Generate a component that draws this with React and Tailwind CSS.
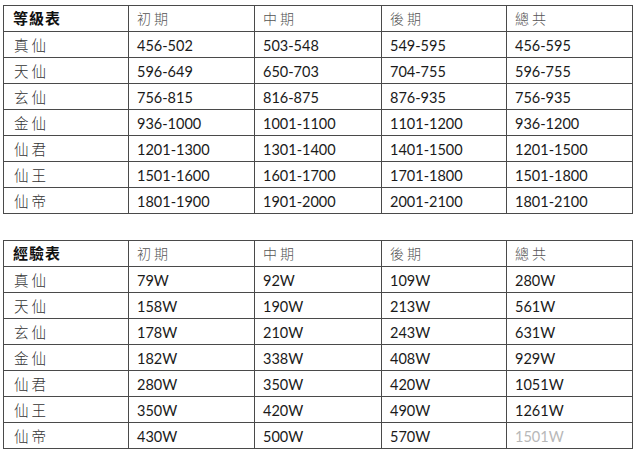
import React from "react";

const t1 = {
  title: "等級表",
  rows: [
    ["真仙", "456-502", "503-548", "549-595", "456-595"],
    ["天仙", "596-649", "650-703", "704-755", "596-755"],
    ["玄仙", "756-815", "816-875", "876-935", "756-935"],
    ["金仙", "936-1000", "1001-1100", "1101-1200", "936-1200"],
    ["仙君", "1201-1300", "1301-1400", "1401-1500", "1201-1500"],
    ["仙王", "1501-1600", "1601-1700", "1701-1800", "1501-1800"],
    ["仙帝", "1801-1900", "1901-2000", "2001-2100", "1801-2100"],
  ],
};
const t2 = {
  title: "經驗表",
  rows: [
    ["真仙", "79W", "92W", "109W", "280W"],
    ["天仙", "158W", "190W", "213W", "561W"],
    ["玄仙", "178W", "210W", "243W", "631W"],
    ["金仙", "182W", "338W", "408W", "929W"],
    ["仙君", "280W", "350W", "420W", "1051W"],
    ["仙王", "350W", "420W", "490W", "1261W"],
    ["仙帝", "430W", "500W", "570W", "1501W"],
  ],
};

const heads = ["初期", "中期", "後期", "總共"];

function Table({ data, faded }) {
  return (
    <div className="grid grid-cols-[125px_126px_127px_125px_126px] border-l border-t border-[#4a4a4a] w-fit">
      <div className="h-[26px] border-r border-b border-[#4a4a4a] pl-[9px] flex items-center text-[15px] font-bold text-[#111] tracking-[1px] font-['Noto_Sans_CJK_TC','Noto_Sans',sans-serif]">
        {data.title}
      </div>
      {heads.map((h) => (
        <div
          key={h}
          className="h-[26px] border-r border-b border-[#4a4a4a] pl-[8px] flex items-center text-[14px] font-light text-[#555] tracking-[3px] font-['Noto_Sans_CJK_TC','Noto_Sans',sans-serif]"
        >
          {h}
        </div>
      ))}
      {data.rows.map((r, i) => (
        <React.Fragment key={i}>
          <div className="h-[26px] border-r border-b border-[#4a4a4a] pl-[10px] flex items-center text-[14.5px] font-light text-[#333] tracking-[3px] font-['Noto_Sans_CJK_TC','Noto_Sans',sans-serif]">
            {r[0]}
          </div>
          {r.slice(1).map((v, j) => (
            <div
              key={j}
              className={
                "h-[26px] border-r border-b border-[#4a4a4a] pl-[8px] pt-[2px] flex items-center text-[14.5px] font-['Lato','Open_Sans',sans-serif] " +
                (faded && i === data.rows.length - 1 && j === 3 ? "text-[#b8b8b8]" : "text-[#1a1a1a]")
              }
            >
              {v}
            </div>
          ))}
        </React.Fragment>
      ))}
    </div>
  );
}

export default function App() {
  return (
    <div className="w-[640px] h-[451px] bg-white overflow-hidden pl-[3px] pt-[5px] flex flex-col gap-[26px]">
      <Table data={t1} />
      <Table data={t2} faded />
    </div>
  );
}
